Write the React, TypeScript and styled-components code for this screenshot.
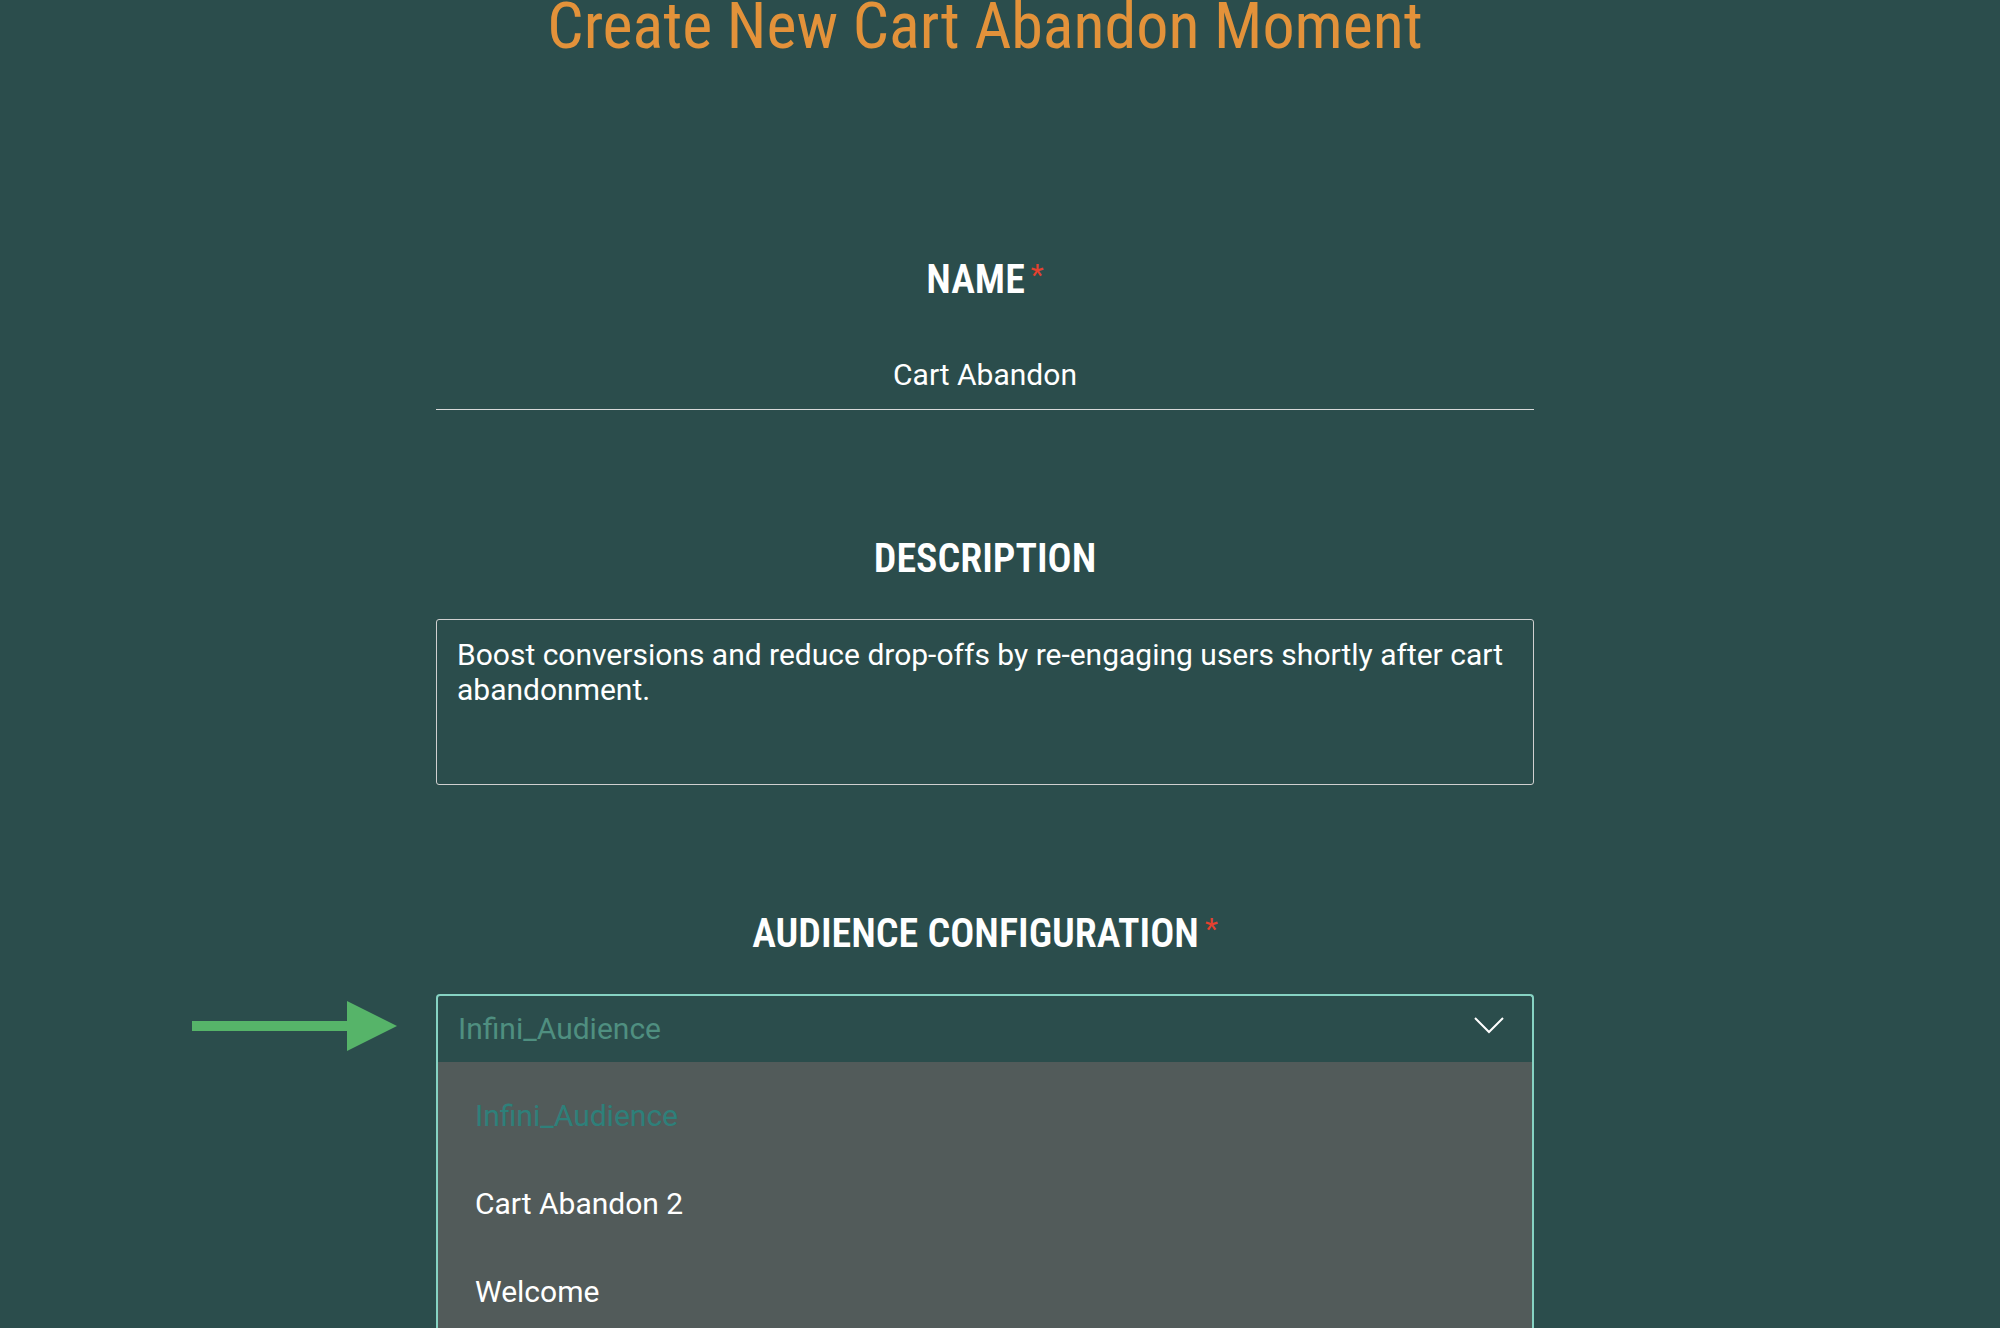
import React from "react";
import styled, { createGlobalStyle } from "styled-components";

const GlobalStyle = createGlobalStyle`
    html, body {
        margin: 0;
        padding: 0;
        overflow: hidden;
        background-color: #2b4d4c;
        font-family: Roboto, "Liberation Sans", sans-serif;
    }
    * {
        box-sizing: border-box;
    }
`;

const condensed = `
    font-family: "Roboto Condensed", Roboto, "Liberation Sans", sans-serif;
    font-stretch: 75%;
`;

const Page = styled.main`
    display: flex;
    justify-content: center;
    padding-right: 30px;
    min-height: 100vh;
`;

const Form = styled.div`
    width: 1098px;
    display: flex;
    flex-direction: column;
`;

const Title = styled.h1`
    ${condensed}
    margin: 0 0 202px;
    font-size: 64px;
    font-weight: 400;
    line-height: 54px;
    text-align: center;
    white-space: nowrap;
    color: #e3923a;
`;

const Field = styled.section<{ $last?: boolean }>`
    display: flex;
    flex-direction: column;
    gap: 37px;
    margin-bottom: ${p => (p.$last ? "0" : "125px")};
`;

const Label = styled.label`
    ${condensed}
    display: block;
    text-align: center;
    font-size: 40px;
    font-weight: 600;
    line-height: normal;
    color: #ffffff;
`;

const Required = styled.span`
    font-family: Roboto, sans-serif;
    font-size: 30px;
    font-weight: 400;
    margin-left: 6px;
    vertical-align: 8px;
    color: #e5412f;
`;

const NameInput = styled.input`
    width: 100%;
    padding: 17px 0 17px;
    border: none;
    border-bottom: 1px solid #d9d9d9;
    background: transparent;
    color: #ffffff;
    font-family: Roboto, sans-serif;
    font-size: 30px;
    line-height: normal;
    text-align: center;
    outline: none;
`;

const DescBox = styled.textarea`
    width: 100%;
    height: 166px;
    padding: 17px 20px;
    border: 1px solid #d0d0d0;
    border-radius: 3px;
    background: transparent;
    color: #ffffff;
    font-family: Roboto, sans-serif;
    font-size: 30px;
    line-height: normal;
    resize: none;
    outline: none;
    overflow: hidden;
`;

const SelectWrap = styled.div`
    position: relative;
`;

const Pointer = styled.svg`
    position: absolute;
    left: -244px;
    top: 7px;
`;

const SelectBox = styled.div`
    border: 2px solid #86d3c3;
    border-bottom: none;
    border-radius: 4px 4px 0 0;
    overflow: hidden;
`;

const SelectHead = styled.div`
    display: flex;
    align-items: center;
    justify-content: space-between;
    height: 66px;
    padding: 0 28px 2px 20px;
    font-size: 30px;
    color: #4f8f80;
`;

const Chevron = styled.svg`
    margin-bottom: 5px;
`;

const Menu = styled.ul`
    margin: 0;
    padding: 9px 0 8px;
    list-style: none;
    background-color: #525b5a;
`;

const MenuItem = styled.li<{ $active?: boolean }>`
    padding: 26.6px 37px;
    font-size: 30px;
    line-height: normal;
    color: ${p => (p.$active ? "#2e807a" : "#ffffff")};
`;

const audiences = ["Infini_Audience", "Cart Abandon 2", "Welcome"];

const App = () => {
    const selected = audiences[0];
    return (
        <>
            <GlobalStyle />
            <Page>
                <Form>
                    <Title>Create New Cart Abandon Moment</Title>
                    <Field>
                        <Label>
                            NAME<Required>*</Required>
                        </Label>
                        <NameInput defaultValue="Cart Abandon" />
                    </Field>
                    <Field>
                        <Label>DESCRIPTION</Label>
                        <DescBox defaultValue="Boost conversions and reduce drop-offs by re-engaging users shortly after cart abandonment." />
                    </Field>
                    <Field $last>
                        <Label>
                            AUDIENCE CONFIGURATION<Required>*</Required>
                        </Label>
                        <SelectWrap>
                            <Pointer width="205" height="50" viewBox="0 0 205 50">
                                <rect x="0" y="20" width="157" height="10" fill="#56b469" />
                                <polygon points="155,0 205,25 155,50" fill="#56b469" />
                            </Pointer>
                            <SelectBox>
                                <SelectHead>
                                    <span>{selected}</span>
                                    <Chevron width="30" height="17" viewBox="0 0 30 17">
                                        <polyline
                                            points="1,1 15,15 29,1"
                                            fill="none"
                                            stroke="#ffffff"
                                            strokeWidth="2"
                                        />
                                    </Chevron>
                                </SelectHead>
                                <Menu>
                                    {audiences.map(name => (
                                        <MenuItem key={name} $active={name === selected}>
                                            {name}
                                        </MenuItem>
                                    ))}
                                </Menu>
                            </SelectBox>
                        </SelectWrap>
                    </Field>
                </Form>
            </Page>
        </>
    );
};

export default App;
